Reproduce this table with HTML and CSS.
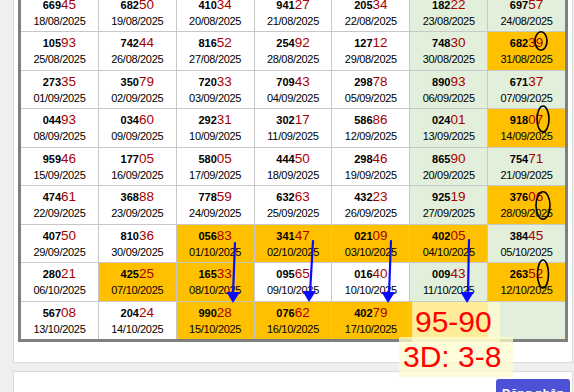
FILE: index.html
```html
<!DOCTYPE html>
<html lang="vi">
<head>
<meta charset="utf-8">
<title>Bảng kết quả</title>
<link rel="stylesheet" href="styles.css">
</head>
<body>
<div class="page">
  <div class="panel panel-table">
    <div class="board">
      <div class="grid">
        <div class="c"><div class="n">669<span>45</span></div><div class="d">18/08/2025</div></div>
        <div class="c"><div class="n">682<span>50</span></div><div class="d">19/08/2025</div></div>
        <div class="c"><div class="n">410<span>34</span></div><div class="d">20/08/2025</div></div>
        <div class="c"><div class="n">941<span>27</span></div><div class="d">21/08/2025</div></div>
        <div class="c"><div class="n">205<span>34</span></div><div class="d">22/08/2025</div></div>
        <div class="c g"><div class="n">182<span>22</span></div><div class="d">23/08/2025</div></div>
        <div class="c g"><div class="n">697<span>57</span></div><div class="d">24/08/2025</div></div>

        <div class="c"><div class="n">105<span>93</span></div><div class="d">25/08/2025</div></div>
        <div class="c"><div class="n">742<span>44</span></div><div class="d">26/08/2025</div></div>
        <div class="c"><div class="n">816<span>52</span></div><div class="d">27/08/2025</div></div>
        <div class="c"><div class="n">254<span>92</span></div><div class="d">28/08/2025</div></div>
        <div class="c"><div class="n">127<span>12</span></div><div class="d">29/08/2025</div></div>
        <div class="c g"><div class="n">748<span>30</span></div><div class="d">30/08/2025</div></div>
        <div class="c o"><div class="n">682<span>39</span></div><div class="d">31/08/2025</div></div>

        <div class="c"><div class="n">273<span>35</span></div><div class="d">01/09/2025</div></div>
        <div class="c"><div class="n">350<span>79</span></div><div class="d">02/09/2025</div></div>
        <div class="c"><div class="n">720<span>33</span></div><div class="d">03/09/2025</div></div>
        <div class="c"><div class="n">709<span>43</span></div><div class="d">04/09/2025</div></div>
        <div class="c"><div class="n">298<span>78</span></div><div class="d">05/09/2025</div></div>
        <div class="c g"><div class="n">890<span>93</span></div><div class="d">06/09/2025</div></div>
        <div class="c g"><div class="n">671<span>37</span></div><div class="d">07/09/2025</div></div>

        <div class="c"><div class="n">044<span>93</span></div><div class="d">08/09/2025</div></div>
        <div class="c"><div class="n">034<span>60</span></div><div class="d">09/09/2025</div></div>
        <div class="c"><div class="n">292<span>31</span></div><div class="d">10/09/2025</div></div>
        <div class="c"><div class="n">302<span>17</span></div><div class="d">11/09/2025</div></div>
        <div class="c"><div class="n">586<span>86</span></div><div class="d">12/09/2025</div></div>
        <div class="c g"><div class="n">024<span>01</span></div><div class="d">13/09/2025</div></div>
        <div class="c o"><div class="n">918<span>07</span></div><div class="d">14/09/2025</div></div>

        <div class="c"><div class="n">959<span>46</span></div><div class="d">15/09/2025</div></div>
        <div class="c"><div class="n">177<span>05</span></div><div class="d">16/09/2025</div></div>
        <div class="c"><div class="n">580<span>05</span></div><div class="d">17/09/2025</div></div>
        <div class="c"><div class="n">444<span>50</span></div><div class="d">18/09/2025</div></div>
        <div class="c"><div class="n">298<span>46</span></div><div class="d">19/09/2025</div></div>
        <div class="c g"><div class="n">865<span>90</span></div><div class="d">20/09/2025</div></div>
        <div class="c g"><div class="n">754<span>71</span></div><div class="d">21/09/2025</div></div>

        <div class="c"><div class="n">474<span>61</span></div><div class="d">22/09/2025</div></div>
        <div class="c"><div class="n">368<span>88</span></div><div class="d">23/09/2025</div></div>
        <div class="c"><div class="n">778<span>59</span></div><div class="d">24/09/2025</div></div>
        <div class="c"><div class="n">632<span>63</span></div><div class="d">25/09/2025</div></div>
        <div class="c"><div class="n">432<span>23</span></div><div class="d">26/09/2025</div></div>
        <div class="c g"><div class="n">925<span>19</span></div><div class="d">27/09/2025</div></div>
        <div class="c o"><div class="n">376<span>06</span></div><div class="d">28/09/2025</div></div>

        <div class="c"><div class="n">407<span>50</span></div><div class="d">29/09/2025</div></div>
        <div class="c"><div class="n">810<span>36</span></div><div class="d">30/09/2025</div></div>
        <div class="c o"><div class="n">056<span>83</span></div><div class="d">01/10/2025</div></div>
        <div class="c o"><div class="n">341<span>47</span></div><div class="d">02/10/2025</div></div>
        <div class="c o"><div class="n">021<span>09</span></div><div class="d">03/10/2025</div></div>
        <div class="c o"><div class="n">402<span>05</span></div><div class="d">04/10/2025</div></div>
        <div class="c g"><div class="n">384<span>45</span></div><div class="d">05/10/2025</div></div>

        <div class="c"><div class="n">280<span>21</span></div><div class="d">06/10/2025</div></div>
        <div class="c o"><div class="n">425<span>25</span></div><div class="d">07/10/2025</div></div>
        <div class="c o"><div class="n">165<span>33</span></div><div class="d">08/10/2025</div></div>
        <div class="c"><div class="n">095<span>65</span></div><div class="d">09/10/2025</div></div>
        <div class="c"><div class="n">016<span>40</span></div><div class="d">10/10/2025</div></div>
        <div class="c g"><div class="n">009<span>43</span></div><div class="d">11/10/2025</div></div>
        <div class="c o"><div class="n">263<span>52</span></div><div class="d">12/10/2025</div></div>

        <div class="c"><div class="n">567<span>08</span></div><div class="d">13/10/2025</div></div>
        <div class="c"><div class="n">204<span>24</span></div><div class="d">14/10/2025</div></div>
        <div class="c o"><div class="n">990<span>28</span></div><div class="d">15/10/2025</div></div>
        <div class="c o"><div class="n">076<span>62</span></div><div class="d">16/10/2025</div></div>
        <div class="c o"><div class="n">402<span>79</span></div><div class="d">17/10/2025</div></div>
        <div class="c o"></div>
        <div class="c g"></div>
      </div>
    </div>
  </div>
  <div class="panel panel-login">
    <button class="btn">Đăng nhập</button>
  </div>
</div>

<div class="note note-pair">95-90</div>
<div class="note note-3d">3D: 3-8</div>

<svg class="marks" width="574" height="392" viewBox="0 0 574 392" xmlns="http://www.w3.org/2000/svg">
  <g stroke="#0a0aff" stroke-width="2.2" fill="none" stroke-linecap="round">
    <line x1="235" y1="243" x2="233" y2="294"/>
    <line x1="313" y1="241" x2="310" y2="293"/>
    <line x1="391" y1="241" x2="389" y2="294"/>
    <line x1="469" y1="240" x2="468" y2="294"/>
  </g>
  <g fill="#0a0aff">
    <polygon points="226.5,292 240,292 233,303"/>
    <polygon points="302.5,291 316,291 309,302"/>
    <polygon points="381.5,292 395,292 388,303"/>
    <polygon points="460.5,292 474,292 467,303"/>
  </g>
  <g stroke="#000" stroke-width="1.6" fill="none">
    <ellipse cx="541" cy="41" rx="6" ry="9.2"/>
    <ellipse cx="543" cy="119" rx="6" ry="13"/>
    <ellipse cx="543" cy="205.5" rx="7" ry="13.7"/>
    <ellipse cx="543" cy="274" rx="5.5" ry="14"/>
  </g>
</svg>
</body>
</html>
```
FILE: styles.css
```css
html, body {
  margin: 0;
  padding: 0;
}
body {
  background: #efefef;
  font-family: "Liberation Sans", Arial, sans-serif;
  width: 574px;
  height: 392px;
  overflow: hidden;
}
.page {
  margin-top: -14.5px;
  margin-left: 13px;
  width: 560px;
}
.panel {
  background: #fff;
  border: 1px solid #dcdcdc;
  box-sizing: border-box;
}
.panel-table {
  padding: 4px 4px 20px 4px;
}
.board {
  border: 3px solid #7f7f7f;
  width: 544px;
}
.grid {
  display: grid;
  grid-template-columns: repeat(7, 1fr);
  grid-auto-rows: 37.5px;
  gap: 1px;
  background: #c8c8c8;
}
.c {
  background: #fff;
  text-align: center;
  padding-top: 2px;
  box-sizing: border-box;
}
.c.g { background: #e2efda; }
.c.o { background: #ffc000; }
.n {
  font-size: 11px;
  font-weight: bold;
  color: #000;
  line-height: 17px;
  height: 17px;
}
.n span {
  font-size: 13.5px;
  font-weight: normal;
  color: #a80000;
}
.d {
  margin-top: 1px;
  font-size: 11px;
  line-height: 14px;
  letter-spacing: -0.3px;
  color: #000;
}
.panel-login {
  margin-top: 8px;
  padding: 7px 2px 20px 0;
  display: flex;
  justify-content: flex-end;
}
.btn {
  width: 74px;
  height: 30px;
  border: 0;
  border-radius: 3px;
  background: #4c51d6;
  color: #fff;
  font-family: "Liberation Sans", Arial, sans-serif;
  font-weight: bold;
  font-size: 12px;
  padding: 0;
}
.note {
  position: absolute;
  color: #ff0000;
  font-family: "Liberation Sans", Arial, sans-serif;
  font-size: 30px;
  line-height: 40px;
  background: rgba(255, 251, 205, 0.75);
  white-space: nowrap;
}
.note-pair {
  left: 412px;
  top: 302px;
  width: 85px;
  height: 40px;
  padding-left: 3px;
}
.note-3d {
  left: 399px;
  top: 337px;
  width: 110px;
  height: 40px;
  padding-left: 4px;
}
.marks {
  position: absolute;
  left: 0;
  top: 0;
  pointer-events: none;
}
```
